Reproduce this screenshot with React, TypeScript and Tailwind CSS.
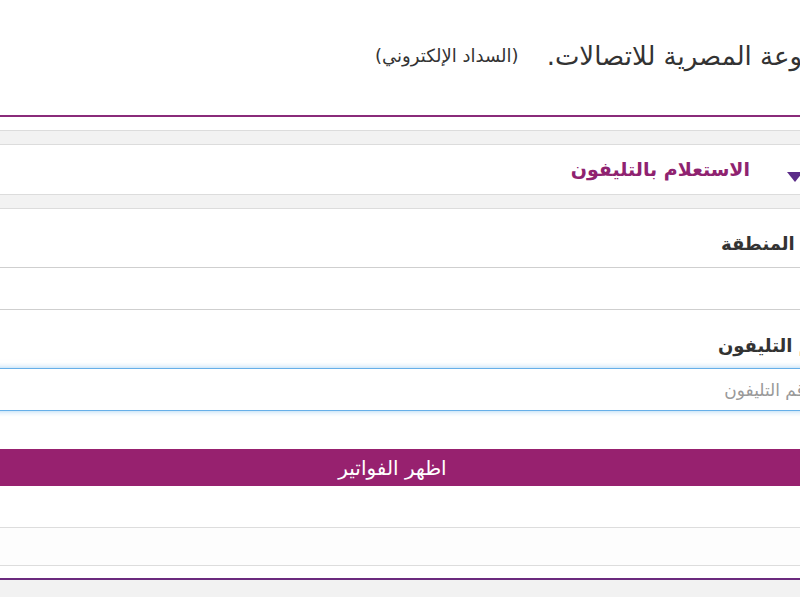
import React from 'react';

const arabic = "font-['DejaVu_Sans',sans-serif]";

const App: React.FC = () => {
  return (
    <div className={`w-[800px] h-[597px] overflow-hidden bg-white ${arabic}`}>
      <div dir="rtl" className="w-[945px] ml-[-80px]">
        {/* header */}
        <div className="h-[115px] flex items-center pr-0 pb-[2px] gap-[28px]">
          <span className="text-[26px] text-[#333]">المجموعة المصرية للاتصالات.</span>
          <span className="text-[18px] text-[#333] mt-[-2px]">(السداد الإلكتروني)</span>
        </div>
        <div className="h-[2px] bg-[#8a2b7a]" />
        <div className="h-[13px] bg-white" />

        {/* tabs */}
        <div className="bg-[#f2f2f2] border-y border-[#dcdcdc] py-[13px]">
          <div className="bg-white border-y border-[#dcdcdc] h-[51px] flex items-center pr-[62px] gap-[37px]">
            <span className="w-0 h-0 border-l-[8px] border-r-[8px] border-t-[10px] border-l-transparent border-r-transparent border-t-[#5b2c88] mt-[14px]" />
            <span className="text-[19px] font-bold text-[#8f2270]">الاستعلام بالتليفون</span>
          </div>
        </div>

        {/* area code */}
        <div className="h-[58px] flex items-end pr-[33px] pb-[10px]">
          <label className="text-[18px] font-bold text-[#333]">كود المنطقة</label>
        </div>
        <div className="h-[43px] border-y border-[#cfcfcf] bg-white" />

        {/* phone */}
        <div className="h-[58px] flex items-end pr-[30px] pb-[9px]">
          <label className="text-[18px] font-bold text-[#333]">رقم التليفون</label>
        </div>
        <input
          type="text"
          placeholder="رقم التليفون"
          className={`block w-full h-[43px] border border-[#66afe9] shadow-[0_0_6px_rgba(102,175,233,0.6)] outline-none pr-[51px] text-[17px] placeholder:text-[#999] ${arabic}`}
        />

        <div className="h-[38px]" />
        <button className="block w-full h-[37px] bg-[#97216f] text-white text-[20px]">اظهر الفواتير</button>

        <div className="h-[41px]" />
        <div className="h-[39px] border-y border-[#dddddd] bg-[#fdfdfd]" />
        <div className="h-[12px]" />
        <div className="h-[2px] bg-[#6b2a7e]" />
        <div className="h-[40px] bg-[#f2f2f2]" />
      </div>
    </div>
  );
};

export default App;
